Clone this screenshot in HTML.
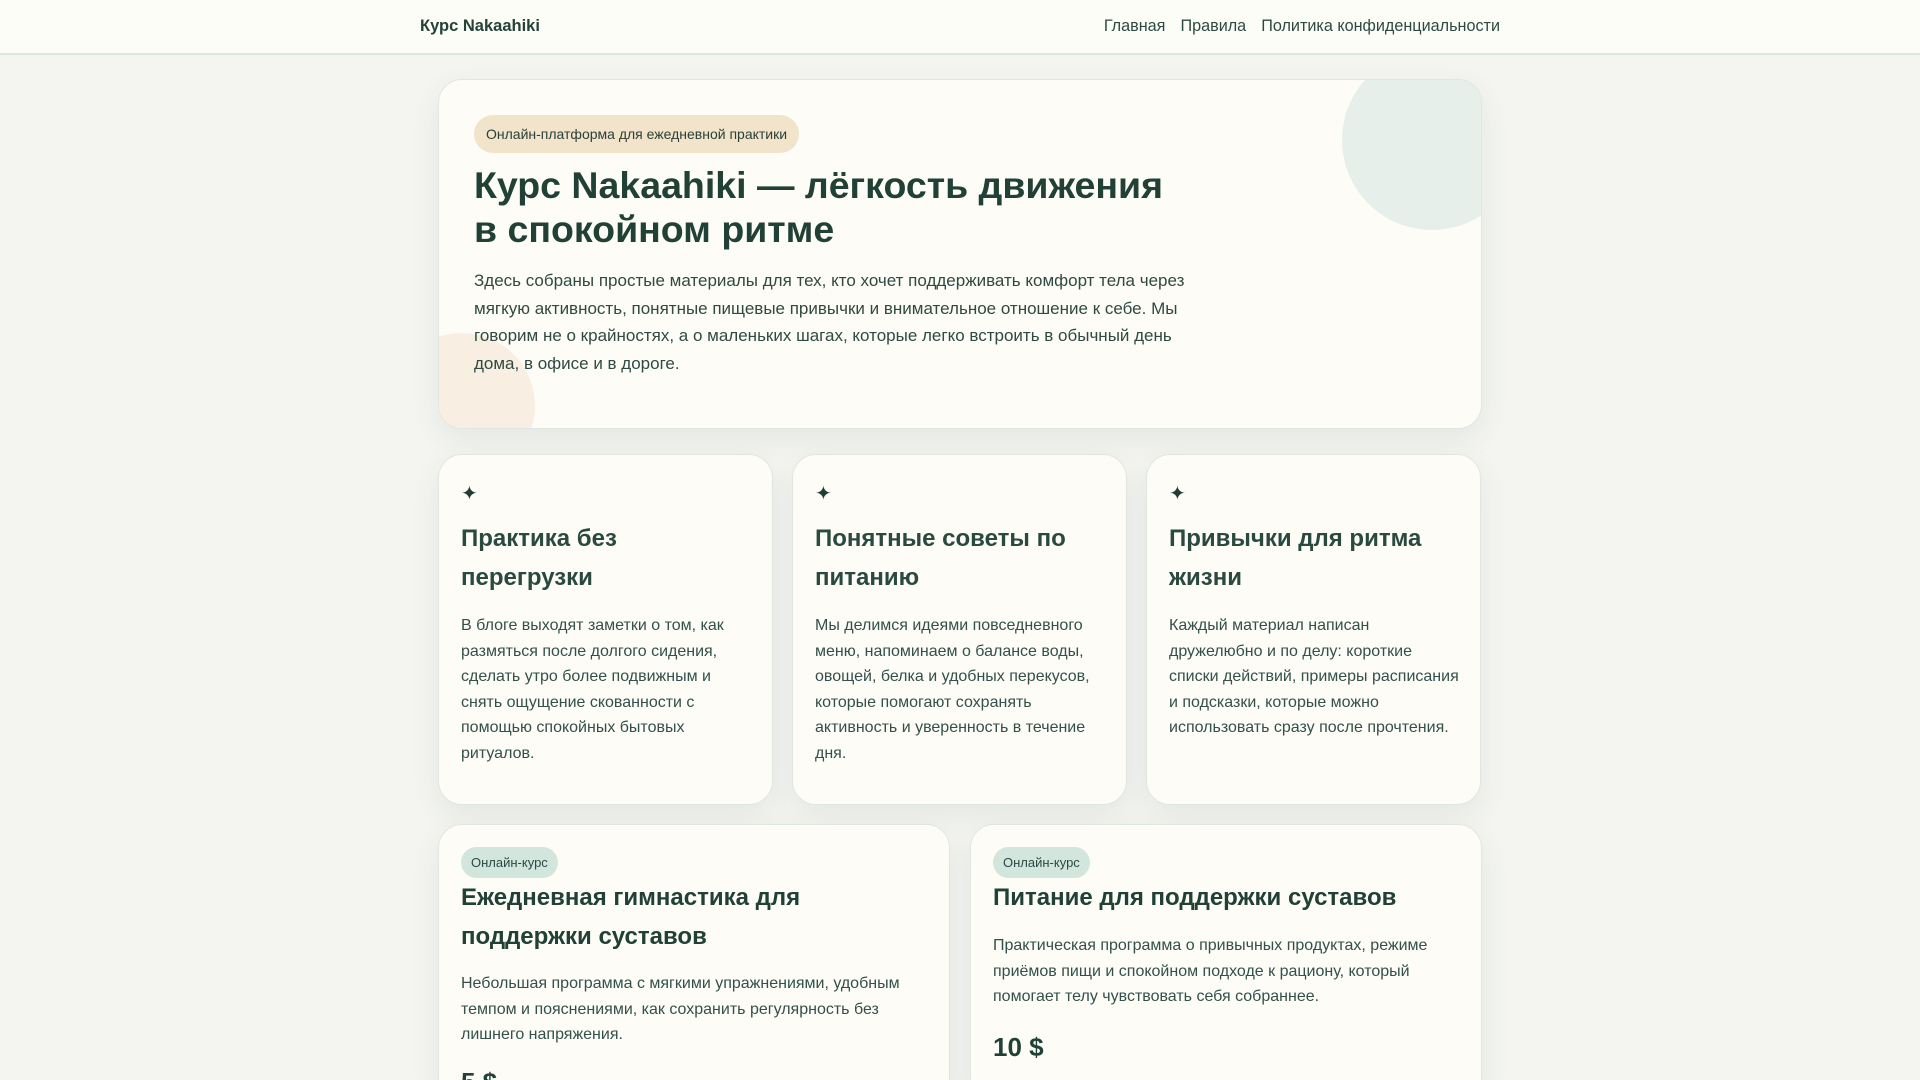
<!DOCTYPE html>
<html><head><meta charset="utf-8"><style>
*{box-sizing:border-box;margin:0;padding:0}
html,body{width:1920px;height:1080px;overflow:hidden}
body{background:#f4f5f1;font-family:"Liberation Sans",sans-serif;color:#21413a;position:relative}
header{height:55px;background:#fdfdf8;border-bottom:2px solid #dde6e1;position:relative}
.logo{position:absolute;left:420px;top:17px;font-weight:bold;font-size:16.5px;color:#244238}
nav{position:absolute;right:420px;top:17px;font-size:16.2px;color:#2d4a42}
nav span{margin-left:15px}
.card{position:absolute;background:#fdfcf7;border:1px solid #e0e7e2;border-radius:24px;box-shadow:0 10px 30px rgba(40,70,60,0.08);overflow:hidden}
.hero{left:438px;top:79px;width:1044px;height:350px}
.c1{position:absolute;left:903px;top:-30px;width:180px;height:180px;border-radius:50%;background:#e6efe9}
.c2{position:absolute;left:-50px;top:253px;width:146px;height:146px;border-radius:50%;background:#f8efe2}
.badge{position:absolute;left:35px;top:35px;height:38px;padding:0 12px;line-height:38px;border-radius:19px;background:#f2e3cb;font-size:14px;color:#2a3f36}
h1{position:absolute;left:35px;top:83px;width:720px;font-size:37.5px;line-height:44px;font-weight:bold;color:#214036}
.lead{position:absolute;left:35px;top:187px;width:720px;font-size:17px;line-height:27.5px;color:#2f4a42}
.f{top:454px;width:335px;height:351px;padding:22px}
.star{position:absolute;left:22px;top:26px;font-size:20px;color:#1f3d35}
.f h3{position:absolute;left:22px;top:64px;width:290px;font-size:24px;line-height:39px;color:#2a4a40}
.f p{position:absolute;left:22px;top:158px;width:295px;font-size:16px;line-height:25.5px;color:#33504a}
.p{top:824px;height:280px}
.tag{position:absolute;left:22px;top:22px;height:31px;line-height:31px;padding:0 10px;border-radius:16px;background:#d2e6dd;font-size:13px;color:#2b4a40}
.p h3{position:absolute;left:22px;top:53px;width:470px;font-size:24px;line-height:39px;color:#214036}
.p p{position:absolute;left:22px;width:450px;font-size:16px;line-height:25.5px;color:#33504a}
.price{position:absolute;left:22px;font-size:26px;font-weight:bold;color:#214036}
</style></head><body>
<header><div class="logo">Курс Nakaahiki</div><nav><span>Главная</span><span>Правила</span><span>Политика конфиденциальности</span></nav></header>
<div class="card hero"><div class="c1"></div><div class="c2"></div>
<div class="badge">Онлайн-платформа для ежедневной практики</div>
<h1>Курс Nakaahiki — лёгкость движения<br>в спокойном ритме</h1>
<div class="lead">Здесь собраны простые материалы для тех, кто хочет поддерживать комфорт тела через мягкую активность, понятные пищевые привычки и внимательное отношение к себе. Мы говорим не о крайностях, а о маленьких шагах, которые легко встроить в обычный день дома, в офисе и в дороге.</div></div>
<div class="card f" style="left:438px"><div class="star">✦</div><h3>Практика без перегрузки</h3><p>В блоге выходят заметки о том, как размяться после долгого сидения, сделать утро более подвижным и снять ощущение скованности с помощью спокойных бытовых ритуалов.</p></div>
<div class="card f" style="left:792px"><div class="star">✦</div><h3>Понятные советы по питанию</h3><p>Мы делимся идеями повседневного меню, напоминаем о балансе воды, овощей, белка и удобных перекусов, которые помогают сохранять активность и уверенность в течение дня.</p></div>
<div class="card f" style="left:1146px"><div class="star">✦</div><h3>Привычки для ритма жизни</h3><p>Каждый материал написан дружелюбно и по делу: короткие списки действий, примеры расписания и подсказки, которые можно использовать сразу после прочтения.</p></div>
<div class="card p" style="left:438px;width:512px"><div class="tag">Онлайн-курс</div><h3 style="width:400px">Ежедневная гимнастика для поддержки суставов</h3><p style="top:146px">Небольшая программа с мягкими упражнениями, удобным темпом и пояснениями, как сохранить регулярность без лишнего напряжения.</p><div class="price" style="top:242px">5 $</div></div>
<div class="card p" style="left:970px;width:512px"><div class="tag">Онлайн-курс</div><h3>Питание для поддержки суставов</h3><p style="top:108px">Практическая программа о привычных продуктах, режиме приёмов пищи и спокойном подходе к рациону, который помогает телу чувствовать себя собраннее.</p><div class="price" style="top:207px">10 $</div></div>
</body></html>
